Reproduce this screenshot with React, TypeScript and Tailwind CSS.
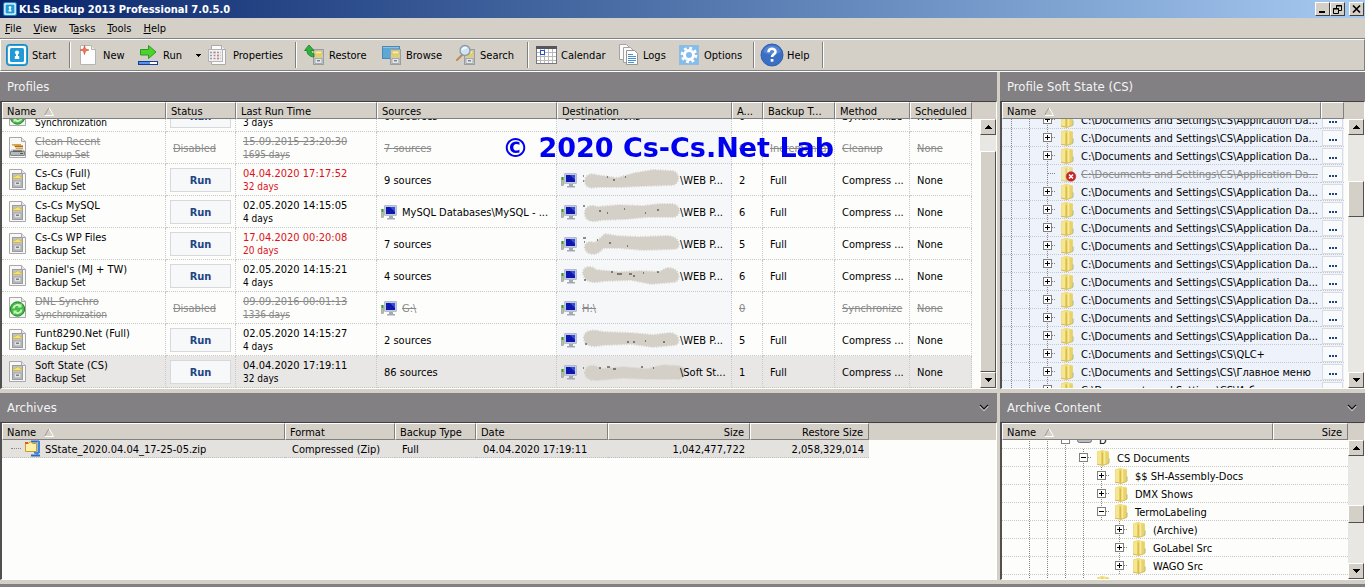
import { useLayoutEffect, useRef } from "react";
import type { ReactNode } from "react";

/* ---------- icons ---------- */

function AppIcon({ className }: { className: string }) {
  return (
    <svg className={className} viewBox="0 0 22 22" aria-hidden="true">
      <rect x="0.5" y="0.5" width="21" height="21" rx="3" fill="#2aa5dc" stroke="#1b86c4" />
      <rect x="2" y="2" width="18" height="18" rx="2" fill="#fff" />
      <rect x="4" y="4" width="14" height="14" rx="1.5" fill="#1f9bd7" />
      <circle cx="11" cy="8.6" r="2.1" fill="#fff" />
      <path d="M10 9h2v3h1.2v3H8.8v-3H10z" fill="#fff" />
    </svg>
  );
}

function Cabinet({ x, y }: { x: number; y: number }) {
  return (
    <g transform={`translate(${x} ${y})`}>
      <rect x="0.5" y="0.5" width="10" height="15" fill="#c9ccce" stroke="#9a9ea2" />
      <rect x="2" y="2" width="7" height="3" fill="#f9eda0" stroke="#c0ab50" strokeWidth="0.6" />
      <path d="M2 5.5h7l1 2.5H1z" fill="#ecd050" />
      <rect x="2" y="9.5" width="7" height="5" fill="#e4e7e9" stroke="#9a9ea2" strokeWidth="0.8" />
      <rect x="4" y="11" width="3" height="1.4" fill="#7b8084" />
    </g>
  );
}

const toolIcons: Record<string, ReactNode> = {
  New: (
    <svg width="24" height="22" viewBox="0 0 24 22">
      <path d="M4.500 1.500h11l4 4v15h-15z" fill="#fdfdfd" stroke="#b4b4b4" />
      <path d="M15.500 1.500v4h4" fill="#e9e9e9" stroke="#b4b4b4" />
      <path d="M8.500 1.500l1 3.500 3.500 1-3.500 1-1 3.500-1-3.500-3.500-1 3.500-1z" fill="#f0785a" stroke="#d8432a" strokeWidth="0.6" />
    </svg>
  ),
  Run: (
    <svg width="24" height="22" viewBox="0 0 24 22">
      <path d="M4.500 5.500h8V1.500l7.500 6.500-7.500 6.500V11h-8z" fill="#4bd42a" stroke="#2a9a20" />
      <rect x="2.500" y="17.500" width="19" height="3" fill="#fff" stroke="#153c9a" />
      <rect x="3" y="18" width="11" height="2" fill="#4f95ea" />
    </svg>
  ),
  Properties: (
    <svg width="24" height="22" viewBox="0 0 24 22">
      <path d="M5.500 1.500h10l4 4v15h-14z" fill="#fbfbfb" stroke="#aaa" />
      <path d="M15.500 1.500v4h4" fill="#eee" stroke="#aaa" />
      <rect x="2.500" y="5.500" width="14" height="12" fill="#f0f0f0" stroke="#b4b4b8" />
      <path d="M4 8.500h11M4 11.500h11M4 14.500h11" stroke="#9a9aa2" strokeDasharray="2 1.500" strokeWidth="1.500" />
      <path d="M7.500 8.500h2M11 11.500h2M11 14.500h2" stroke="#d88078" strokeWidth="1.500" />
    </svg>
  ),
  Restore: (
    <svg width="24" height="22" viewBox="0 0 24 22">
      <Cabinet x={11} y={5} />
      <path d="M7 1l5 5.500H9c0 2 1 3 3 3.500v3C7.500 12.500 5 10.500 5 6.500H2.500z" fill="#2fb23a" stroke="#187a24" strokeWidth="0.8" />
    </svg>
  ),
  Browse: (
    <svg width="24" height="22" viewBox="0 0 24 22">
      <rect x="3.500" y="2.500" width="17" height="12" fill="#5ba8d4" stroke="#4a88b8" />
      <path d="M4 3.500h16" stroke="#8cc4e4" />
      <Cabinet x={11} y={5} />
    </svg>
  ),
  Search: (
    <svg width="24" height="22" viewBox="0 0 24 22">
      <Cabinet x={11} y={5} />
      <path d="M9 11l-5 5" stroke="#c08a48" strokeWidth="2" strokeLinecap="round" />
      <circle cx="12" cy="6.500" r="5" fill="#cfe4f4" stroke="#8c9aa6" strokeWidth="1.300" />
      <path d="M9 6c1-2 3-2.500 4.500-2" stroke="#fff" fill="none" strokeWidth="1.500" />
    </svg>
  ),
  Calendar: (
    <svg width="24" height="22" viewBox="0 0 24 22">
      <rect x="2.500" y="2.500" width="20" height="17" fill="#fff" stroke="#77787c" />
      <rect x="2" y="2" width="21" height="3" fill="#55565c" />
      <path d="M6.500 5v14M10.500 5v14M14.500 5v14M18.500 5v14M3 8.500h19M3 12.500h19M3 16.500h19" stroke="#b9b9bd" />
      <rect x="6.500" y="6.500" width="4" height="4" fill="#fff" stroke="#2550d0" />
    </svg>
  ),
  Logs: (
    <svg width="24" height="22" viewBox="0 0 24 22">
      <path d="M3.500 0.500h7l3 3v12h-10z" fill="#fafafa" stroke="#a4a4a4" />
      <path d="M7.500 3.500h7l3 3v12h-10z" fill="#fafafa" stroke="#a4a4a4" />
      <path d="M10.500 6.500h8l3 3v11h-11z" fill="#fff" stroke="#949494" />
      <path d="M12 10.500h5M12 12.500h8M12 14.500h8M12 16.500h8M12 18.500h6" stroke="#4a90d4" />
    </svg>
  ),
  Options: (
    <svg width="24" height="22" viewBox="0 0 24 22">
      <rect x="2.500" y="1.500" width="19" height="19" fill="#84bdec" stroke="#94bce0" />
      <circle cx="12" cy="11" r="7" fill="none" stroke="#fff" strokeWidth="2.600" strokeDasharray="2.900 2.600" />
      <circle cx="12" cy="11" r="4.500" fill="none" stroke="#fff" strokeWidth="3" />
    </svg>
  ),
  Help: (
    <svg width="24" height="24" viewBox="0 0 24 24">
      <circle cx="12" cy="12" r="11" fill="#3a6fc4" stroke="#2f5fb0" />
      <path d="M3 9a9.500 9.500 0 0 1 18 0c-5 3-13 3-18 0z" fill="#5f90da" opacity="0.700" />
      <path d="M8.500 9.200c0-4.700 7-4.400 7-.4 0 2.600-3.500 2.600-3.500 5.200" stroke="#fff" strokeWidth="2.600" fill="none" />
      <rect x="10.700" y="16" width="2.700" height="2.700" fill="#fff" />
    </svg>
  ),
};

type Kind = "backup" | "sync" | "clean";

function ProfileIcon({ kind }: { kind: Kind }) {
  return (
    <svg width="18" height="22" viewBox="0 0 18 22" className="shrink-0" aria-hidden="true">
      <path d="M0.500 0.500h12l4 4v16h-16z" fill="#f8f8f8" stroke="#a8a8a8" />
      <path d="M12.500 0.500v4h4" fill="#e6e6e6" stroke="#a8a8a8" />
      {kind === "backup" && (
        <g>
          <rect x="3.500" y="4.500" width="10" height="14" fill="#c2c5c8" stroke="#989ca0" />
          <path d="M4 9.500h9v-2.500l-2 .5-2-2-3 2-2-.5z" fill="#f6e070" stroke="#bda74c" strokeWidth="0.600" />
          <rect x="5" y="12" width="7" height="5" fill="#dfe2e4" stroke="#989ca0" strokeWidth="0.800" />
          <rect x="7" y="13.500" width="3" height="1.500" fill="#7c8084" />
        </g>
      )}
      {kind === "sync" && (
        <g>
          <circle cx="8.500" cy="12" r="7.200" fill="#46bb46" stroke="#208028" />
          <path d="M4.500 11.500a4 4 0 0 1 7-2.200M12.500 12.500a4 4 0 0 1-7 2.200" stroke="#c4f5ba" strokeWidth="2" fill="none" />
          <path d="M12.500 6.500v4h-4zM4.500 17.500v-4h4z" fill="#c4f5ba" />
        </g>
      )}
      {kind === "clean" && (
        <g>
          <path d="M3 7h9v1.500H3z" fill="#e0a23a" />
          <path d="M5 8.500h9v1.500H6z" fill="#a56c1e" />
          <path d="M6 10.500h8v1.500H7z" fill="#e0a23a" />
          <path d="M2.500 13h12l1 2h-14z" fill="#f2f2f2" stroke="#9c9fa2" strokeWidth="0.800" />
          <rect x="1.500" y="14.500" width="14" height="4" rx="0.500" fill="#b4b8bb" stroke="#808487" />
          <path d="M4 14h9" stroke="#3b3b3b" />
          <path d="M11 16.500h3" stroke="#55585a" />
        </g>
      )}
    </svg>
  );
}

function ComputerIcon() {
  return (
    <svg width="18" height="16" viewBox="0 0 18 16" className="shrink-0" aria-hidden="true">
      <rect x="3.500" y="1.500" width="12" height="10" rx="0.500" fill="#c3cad8" stroke="#b4bccb" />
      <rect x="5" y="3" width="9" height="7" fill="#0d16b0" />
      <path d="M9 3h5v5z" fill="#3a4be0" />
      <path d="M8 12h4v2h2v1.500H6V14h2z" fill="#a4a9b5" />
      <rect x="0.500" y="5.500" width="2" height="8" fill="#b4bcae" stroke="#929a8e" strokeWidth="0.600" />
      <path d="M1.500 5v3" stroke="#2ca02c" strokeWidth="1.500" />
    </svg>
  );
}

function FolderIcon({ excluded }: { excluded?: boolean }) {
  return (
    <svg width="18" height="17" viewBox="0 0 18 17" className="shrink-0 overflow-visible" aria-hidden="true">
      <g opacity={excluded ? 0.7 : 1}>
        <path d="M5 2.500l5-1.500 7 1.500v12l-6 2-6-1z" fill="#eed873" />
        <path d="M5.500 3l4-1v13.500l-4-.8z" fill="#f5e691" />
        <path d="M9.500 3l2 1v12.200l-2-.3z" fill="#dcbc48" />
        <path d="M11.500 2l2 .5v12.700l-2 .8z" fill="#f8eba0" />
        <path d="M13.500 3l3 .5v10.700l-3 1z" fill="#ead26a" />
        <path d="M16.500 9.500h1v4.500h-1z" fill="#9fbb8c" />
        <path d="M5 15.200l6 1.200 6-2" stroke="#cbb254" strokeWidth="0.800" fill="none" />
      </g>
      {excluded && (
        <g>
          <circle cx="15" cy="11.500" r="4.800" fill="#cc2222" stroke="#b04040" strokeWidth="0.600" />
          <path d="M13 9.500l4 4M17 9.500l-4 4" stroke="#fff" strokeWidth="1.600" />
        </g>
      )}
    </svg>
  );
}

function ZipIcon() {
  return (
    <svg width="16" height="17" viewBox="0 0 16 17" className="shrink-0" aria-hidden="true">
      <path d="M6 1.500h8M6 15.500h9M9 12.500h5" stroke="#2b6cc0" strokeWidth="2" />
      <path d="M13.500 1v12" stroke="#3f86d8" strokeWidth="3" />
      <path d="M12.500 2v10" stroke="#a8ccf0" strokeWidth="0.800" />
      <path d="M9 12l3 3.500 3-3.500z" fill="#3f86d8" />
      <path d="M0.500 3.500h3l1-1.500h2l1 1.500h4v8h-11z" fill="#fdf0a8" stroke="#d09a2a" />
      <path d="M0 2h3v2H0z" fill="#dd5a1e" />
    </svg>
  );
}

type GuideKind = "blank" | "line" | "plus" | "minus" | "leaf";

function Guide({ kind }: { kind: GuideKind }) {
  const boxed = kind === "plus" || kind === "minus";
  return (
    <svg width="18" height="17" viewBox="0 0 18 17" className="shrink-0" shapeRendering="crispEdges" aria-hidden="true">
      {kind !== "blank" && <path d="M9.500 0v17" stroke="#848484" strokeDasharray="1 1" />}
      {(boxed || kind === "leaf") && <path d="M10 8.500h8" stroke="#848484" strokeDasharray="1 1" />}
      {boxed && <rect x="5.500" y="4.500" width="8" height="8" fill="#fff" stroke="#808080" />}
      {boxed && <path d="M7 8.500h5" stroke="#000" />}
      {kind === "plus" && <path d="M9.500 6v5" stroke="#000" />}
    </svg>
  );
}

function SortMark() {
  return (
    <svg width="10" height="9" viewBox="0 0 10 9" className="ml-2 shrink-0" aria-hidden="true">
      <path d="M5 0.500L0.500 8.500" stroke="#9c9a94" fill="none" />
      <path d="M5 0.500L9.500 8.500H0.500" stroke="#fff" fill="none" />
    </svg>
  );
}

function Chevron() {
  return (
    <svg width="10" height="7" viewBox="0 0 10 7" aria-hidden="true">
      <path d="M1 2l4 4 4-4" stroke="#f0f0f0" strokeWidth="1.500" fill="none" />
      <path d="M1 1l4 4 4-4" stroke="#111" strokeWidth="1.300" fill="none" />
    </svg>
  );
}

/* Patches painted over private parts of a destination path */
const smudges = [
  { d: "M2 12C2 6 8 4 13 6L34 9 52 4 70 1 90 2C97 4 97 14 90 16L60 17 40 18 14 18C6 20 2 17 2 12Z", bits: "M0 7h1M0 12h1M24 8h1M30 11h2M42 8h1" },
  { d: "M2 13C1 6 8 3 14 6L36 4 60 5 76 3 90 3C98 5 98 14 91 16L64 16 44 18 18 19C8 22 2 19 2 13Z", bits: "M0 5h2M16 10h2M24 12h1M41 8h1M74 9h2M62 12h1" },
  { d: "M2 15C1 9 8 8 12 10L22 1 34 3 56 4 84 3C97 3 99 15 92 16L60 17 36 15 20 15C14 24 3 22 2 15Z", bits: "M0 5h3M1 9h1M14 7h1M26 10h2M44 13h1" },
  { d: "M0 8C0 1 9 0 13 5L36 7 58 6 76 7 84 3C97 2 99 16 91 17L68 19 48 15 20 16C8 19 1 16 0 8Z", bits: "M1 15h2M28 7h2M34 9h5M46 9h3M50 11h2M60 8h1M74 7h2" },
  { d: "M1 9C1 1 10 0 20 3L48 4 70 6 86 4C97 4 98 15 92 16L70 18 48 15 20 16C8 19 1 16 1 9Z", bits: "M2 15h2M44 13h2M50 13h2M62 12h1M80 13h2" },
  { d: "M2 12C2 3 12 3 18 8L40 6 64 8 80 4 96 5C104 7 103 17 96 18L64 18 40 17 16 19C7 20 2 17 2 12Z", bits: "M0 7h1M16 7h2M24 6h3M30 8h3M58 6h2M70 7h1" },
];

function Smudge({ n }: { n: number }) {
  return (
    <svg width="97" height="22" viewBox="0 0 97 22" className="shrink-0 overflow-visible" aria-hidden="true">
      <path d={smudges[n].d} fill="#d4d0c8" />
      <path d={smudges[n].d} fill="none" stroke="#d4d0c8" strokeWidth="2" strokeDasharray="1 1.500" />
      <path d={smudges[n].bits} stroke="#222" strokeWidth="1.200" />
    </svg>
  );
}

/* ---------- shared pieces ---------- */

function Th({ children, right, sort }: { children?: ReactNode; right?: boolean; sort?: boolean }) {
  return (
    <th className="sticky top-0 z-10 h-[17px] border-t border-r border-b border-l border-t-white border-r-[#808080] border-b-[#808080] border-l-white bg-[#d4d0c8] p-0 font-normal">
      <div className={right ? "flex h-[15px] items-center justify-end pt-0.5 pr-[5px]" : "flex h-[15px] items-center pt-0.5 pl-1"}>
        <span className="whitespace-nowrap">{children}</span>
        {sort && <SortMark />}
      </div>
    </th>
  );
}

function FillTh() {
  return <th aria-hidden="true" className="sticky top-0 z-10 h-[17px] bg-[#d4d0c8] p-0" />;
}

function ScrollButton({ down }: { down?: boolean }) {
  return (
    <button
      type="button"
      aria-label={down ? "Scroll down" : "Scroll up"}
      className="flex h-4 w-4 shrink-0 items-center justify-center border border-t-white border-r-[#505050] border-b-[#505050] border-l-white bg-[#d4d0c8]"
    >
      <svg width="7" height="4" viewBox="0 0 7 4" shapeRendering="crispEdges">
        <path d={down ? "M0 0h7L3.500 4z" : "M0 4h7L3.500 0z"} fill="#000" />
      </svg>
    </button>
  );
}

function Scrollbar({ before, thumb, after }: { before: string; thumb: string; after: string }) {
  return (
    <div className="flex w-4 shrink-0 flex-col bg-[#e9e7e3]">
      <div className="h-[17px] shrink-0 bg-[#d4d0c8]" />
      <ScrollButton />
      <div className={before} />
      <div className={`${thumb} border border-t-white border-r-[#505050] border-b-[#505050] border-l-white bg-[#d4d0c8]`} />
      <div className={after} />
      <ScrollButton down />
    </div>
  );
}

function Scroller({ offset, children }: { offset: number; children: ReactNode }) {
  const ref = useRef<HTMLDivElement>(null);
  useLayoutEffect(() => {
    if (ref.current) ref.current.scrollTop = offset;
  }, [offset]);
  return (
    <div ref={ref} className="min-w-0 flex-1 overflow-hidden bg-[#fdfefc]">
      {children}
    </div>
  );
}

function Panel({ title, collapsible, className, children }: { title: string; collapsible?: boolean; className: string; children: ReactNode }) {
  return (
    <section className={`flex min-w-0 flex-col ${className}`}>
      <header className="flex h-[29px] shrink-0 items-center justify-between bg-[#828083] pr-2 pl-[7px]">
        <h2 className="text-[13px] text-[#f4f4f4]">{title}</h2>
        {collapsible && (
          <button type="button" aria-label={`Collapse ${title}`}>
            <Chevron />
          </button>
        )}
      </header>
      <div className="flex min-h-0 flex-1 border-t border-r border-b border-l-2 border-t-[#404040] border-r-white border-b-white border-l-[#505050]">
        {children}
      </div>
    </section>
  );
}

/* ---------- profiles ---------- */

type Profile = {
  name: string;
  type: string;
  kind: Kind;
  time: string;
  days: string;
  late?: boolean;
  off?: boolean;
  selected?: boolean;
  src: string;
  srcIcon?: boolean;
  dest: string;
  smudge?: number;
  archives: string;
  backup: string;
  method: string;
};

const profiles: Profile[] = [
  { name: "", type: "Synchronization", kind: "sync", time: "", days: "3 days", src: "67 sources", dest: "67 destinations", archives: "0", backup: "", method: "Synchronize" },
  { name: "Clean Recent", type: "Cleanup Set", kind: "clean", time: "15.09.2015 23:20:30", days: "1695 days", off: true, src: "7 sources", dest: "", archives: "0", backup: "Incremental", method: "Cleanup" },
  { name: "Cs-Cs (Full)", type: "Backup Set", kind: "backup", time: "04.04.2020 17:17:52", days: "32 days", late: true, src: "9 sources", dest: "\\WEB P...", smudge: 0, archives: "2", backup: "Full", method: "Compress ..." },
  { name: "Cs-Cs MySQL", type: "Backup Set", kind: "backup", time: "02.05.2020 14:15:05", days: "4 days", src: "MySQL Databases\\MySQL - ...", srcIcon: true, dest: "\\WEB P...", smudge: 1, archives: "6", backup: "Full", method: "Compress ..." },
  { name: "Cs-Cs WP Files", type: "Backup Set", kind: "backup", time: "17.04.2020 00:20:08", days: "20 days", late: true, src: "7 sources", dest: "\\WEB P...", smudge: 2, archives: "5", backup: "Full", method: "Compress ..." },
  { name: "Daniel's (MJ + TW)", type: "Backup Set", kind: "backup", time: "02.05.2020 14:15:21", days: "4 days", src: "4 sources", dest: "\\WEB P...", smudge: 3, archives: "6", backup: "Full", method: "Compress ..." },
  { name: "DNL Synchro", type: "Synchronization", kind: "sync", time: "09.09.2016 00:01:13", days: "1336 days", off: true, src: "G:\\", srcIcon: true, dest: "H:\\", archives: "0", backup: "", method: "Synchronize" },
  { name: "Funt8290.Net (Full)", type: "Backup Set", kind: "backup", time: "02.05.2020 14:15:27", days: "4 days", src: "2 sources", dest: "\\WEB P...", smudge: 4, archives: "5", backup: "Full", method: "Compress ..." },
  { name: "Soft State (CS)", type: "Backup Set", kind: "backup", time: "04.04.2020 17:19:11", days: "32 days", selected: true, src: "86 sources", dest: "\\Soft St...", smudge: 5, archives: "1", backup: "Full", method: "Compress ..." },
];

function Td({ children, tint }: { children?: ReactNode; tint?: string }) {
  return <td className={`h-8 border-r border-b border-dotted border-[#c8c8c8] p-0 ${tint ?? ""}`}>{children}</td>;
}

function PlainCell({ text, iconed, off }: { text: string; iconed?: boolean; off?: boolean }) {
  return (
    <div className={iconed ? "flex items-center gap-[3px] pt-px pl-1" : "flex items-center pt-px pl-[7px]"}>
      {iconed && <ComputerIcon />}
      <span className={off ? "whitespace-nowrap text-[#8a8a8a] line-through" : "whitespace-nowrap"}>{text}</span>
    </div>
  );
}

function TwoLines({ a, b, tone }: { a: string; b: string; tone: string }) {
  return (
    <div className={`min-w-0 leading-[13px] whitespace-nowrap ${tone}`}>
      <div className="h-[13px]">{a}</div>
      <div className="h-[13px] text-[10px]">{b}</div>
    </div>
  );
}

function ProfileRow({ p }: { p: Profile }) {
  const tone = p.off ? "text-[#8a8a8a] line-through" : "";
  return (
    <tr className={p.selected ? "bg-[#e9e7e5]" : ""}>
      <Td>
        <div className="flex items-center gap-2 pl-[7px]">
          <ProfileIcon kind={p.kind} />
          <TwoLines a={p.name} b={p.type} tone={tone} />
        </div>
      </Td>
      <Td>
        {p.off ? (
          <PlainCell text="Disabled" off />
        ) : (
          <div className="pt-px pr-1 pl-1">
            <button type="button" className="block h-6 w-full border border-[#d6d8da] bg-[#f6f8f9] text-[11px] font-bold text-[#1f4583]">
              Run
            </button>
          </div>
        )}
      </Td>
      <Td>
        <div className="pl-[7px]">
          <TwoLines a={p.time} b={p.days} tone={p.late ? "text-[#e01018]" : tone} />
        </div>
      </Td>
      <Td>
        <PlainCell text={p.src} iconed={p.srcIcon} off={p.off} />
      </Td>
      <Td tint={p.selected ? "" : "bg-[#f6f7f8]"}>
        {p.smudge !== undefined ? (
          <div className="flex items-center pt-px pl-1">
            <ComputerIcon />
            <span className="w-1 shrink-0" />
            <Smudge n={p.smudge} />
            <span className="whitespace-nowrap">{p.dest}</span>
          </div>
        ) : (
          p.dest && <PlainCell text={p.dest} iconed={p.off} off={p.off} />
        )}
      </Td>
      <Td><PlainCell text={p.archives} off={p.off} /></Td>
      <Td><PlainCell text={p.backup} off={p.off} /></Td>
      <Td><PlainCell text={p.method} off={p.off} /></Td>
      <Td><PlainCell text="None" off={p.off} /></Td>
      <td className="bg-[#fdfefc] p-0" />
    </tr>
  );
}

function ProfilesTable() {
  return (
    <table className="w-full table-fixed border-separate border-spacing-0 text-left">
      <colgroup>
        <col className="w-[164px]" />
        <col className="w-[70px]" />
        <col className="w-[141px]" />
        <col className="w-[180px]" />
        <col className="w-[175px]" />
        <col className="w-[31px]" />
        <col className="w-[72px]" />
        <col className="w-[75px]" />
        <col className="w-[62px]" />
        <col />
      </colgroup>
      <thead>
        <tr>
          <Th sort>Name</Th>
          <Th>Status</Th>
          <Th>Last Run Time</Th>
          <Th>Sources</Th>
          <Th>Destination</Th>
          <Th>A...</Th>
          <Th>Backup T...</Th>
          <Th>Method</Th>
          <Th>Scheduled</Th>
          <FillTh />
        </tr>
      </thead>
      <tbody>
        {profiles.map((p) => (
          <ProfileRow key={p.name} p={p} />
        ))}
      </tbody>
    </table>
  );
}

/* ---------- trees ---------- */

type Node = { label: string; guides: GuideKind[]; off?: boolean; drive?: boolean };

const plus: GuideKind[] = ["line", "line", "plus"];
const appData = "C:\\Documents and Settings\\CS\\Application Da...";
const stateNodes: Node[] = [
  ...Array.from({ length: 13 }, (_, i): Node => (i === 3 ? { label: appData, guides: ["line", "line", "leaf"], off: true } : { label: appData, guides: plus })),
  { label: "C:\\Documents and Settings\\CS\\QLC+", guides: plus },
  { label: "C:\\Documents and Settings\\CS\\Главное меню", guides: plus },
  { label: "C:\\Documents and Settings\\CS\\Избранное", guides: plus },
];

const contentNodes: Node[] = [
  { label: "D", guides: ["blank", "line", "line", "minus"], drive: true },
  { label: "CS Documents", guides: ["blank", "line", "line", "line", "minus"] },
  { label: "$$ SH-Assembly-Docs", guides: ["blank", "line", "line", "line", "line", "plus"] },
  { label: "DMX Shows", guides: ["blank", "line", "line", "line", "line", "plus"] },
  { label: "TermoLabeling", guides: ["blank", "line", "line", "line", "line", "minus"] },
  { label: "(Archive)", guides: ["blank", "line", "line", "line", "line", "blank", "plus"] },
  { label: "GoLabel Src", guides: ["blank", "line", "line", "line", "line", "blank", "plus"] },
  { label: "WAGO Src", guides: ["blank", "line", "line", "line", "line", "blank", "plus"] },
  { label: "", guides: ["blank", "line", "line", "line", "line"] },
];

function TreeCell({ node }: { node: Node }) {
  return (
    <div className="flex h-[17px] items-center">
      {node.guides.map((g, i) => (
        <Guide key={i} kind={g} />
      ))}
      {node.drive ? (
        <svg width="18" height="17" viewBox="0 0 18 17" className="shrink-0" aria-hidden="true">
          <rect x="3.500" y="6.500" width="14" height="5" rx="2" fill="#b8bcc0" stroke="#707478" />
        </svg>
      ) : (
        <FolderIcon excluded={node.off} />
      )}
      <span className={node.off ? "ml-[7px] pt-0.5 whitespace-nowrap text-[#8a8a8a] line-through" : "ml-[7px] pt-0.5 whitespace-nowrap"}>{node.label}</span>
    </div>
  );
}

function StateTree() {
  return (
    <table className="w-full table-fixed border-separate border-spacing-0 text-left">
      <colgroup>
        <col />
        <col className="w-[23px]" />
        <col className="w-1" />
      </colgroup>
      <thead>
        <tr>
          <Th sort>Name</Th>
          <Th />
          <FillTh />
        </tr>
      </thead>
      <tbody>
        {stateNodes.map((n, i) => (
          <tr key={i}>
            <td className="border-b border-dotted border-[#c4c8cf] bg-[#edf2fb] p-0">
              <TreeCell node={n} />
            </td>
            <td className="border-b border-dotted border-[#c4c8cf] bg-[#edf2fb] p-0">
              <button type="button" aria-label="Edit source" className="mx-px flex h-4 w-[21px] items-center justify-center border border-[#d8dce2] bg-[#f8fafc]">
                <svg width="8" height="8" viewBox="0 0 8 8" shapeRendering="crispEdges">
                  <path d="M0 5h2v2H0zM3 5h2v2H3zM6 5h2v2H6z" fill="#1f4583" />
                </svg>
              </button>
            </td>
            <td className="p-0" />
          </tr>
        ))}
      </tbody>
    </table>
  );
}

function ContentTree() {
  return (
    <table className="w-full table-fixed border-separate border-spacing-0 text-left">
      <colgroup>
        <col />
        <col className="w-[75px]" />
      </colgroup>
      <thead>
        <tr>
          <Th sort>Name</Th>
          <Th right>Size</Th>
        </tr>
      </thead>
      <tbody>
        {contentNodes.map((n, i) => (
          <tr key={i}>
            <td className="border-b border-dotted border-[#c8c8c8] p-0">
              <TreeCell node={n} />
            </td>
            <td className="border-b border-dotted border-[#c8c8c8] p-0" />
          </tr>
        ))}
      </tbody>
    </table>
  );
}

/* ---------- archives ---------- */

function ArchivesTable() {
  const cell = "h-[18px] border-b border-dotted border-[#c0c0c0] bg-[#e4e2df] p-0 pt-px pl-[7px]";
  const num = "h-[18px] border-b border-dotted border-[#c0c0c0] bg-[#e4e2df] p-0 pt-px pr-[5px] text-right";
  return (
    <table className="w-full table-fixed border-separate border-spacing-0 text-left">
      <colgroup>
        <col className="w-[283px]" />
        <col className="w-[110px]" />
        <col className="w-[81px]" />
        <col className="w-[132px]" />
        <col className="w-[142px]" />
        <col className="w-[119px]" />
        <col />
      </colgroup>
      <thead>
        <tr>
          <Th sort>Name</Th>
          <Th>Format</Th>
          <Th>Backup Type</Th>
          <Th>Date</Th>
          <Th right>Size</Th>
          <Th right>Restore Size</Th>
          <FillTh />
        </tr>
      </thead>
      <tbody>
        <tr>
          <td className="h-[18px] border-b border-dotted border-[#c0c0c0] bg-[#e4e2df] p-0">
            <div className="flex h-[17px] items-center pl-[9px]">
              <span className="mr-1 w-[10px] border-t border-dotted border-[#888]" />
              <ZipIcon />
              <span className="ml-1 pt-px">SState_2020.04.04_17-25-05.zip</span>
            </div>
          </td>
          <td className={cell}>Compressed (Zip)</td>
          <td className={cell}>Full</td>
          <td className={cell}>04.04.2020 17:19:11</td>
          <td className={num}>1,042,477,722</td>
          <td className={num}>2,058,329,014</td>
          <td />
        </tr>
      </tbody>
    </table>
  );
}

/* ---------- window chrome ---------- */

function TitleBar() {
  const btn = "flex h-[14px] w-[15px] items-center justify-center border border-t-white border-r-[#404040] border-b-[#404040] border-l-white bg-[#d4d0c8]";
  return (
    <div className="flex h-[18px] shrink-0 items-center bg-linear-to-r from-[#0a246a] to-[#a6caf0] pr-px pl-[3px]">
      <AppIcon className="h-[14px] w-[14px]" />
      <h1 className="ml-0.5 flex-1 text-[11px] font-bold text-white">KLS Backup 2013 Professional 7.0.5.0</h1>
      <button type="button" aria-label="Minimize" className={btn}>
        <svg width="9" height="8" viewBox="0 0 9 8"><path d="M1 6h6v2H1z" /></svg>
      </button>
      <button type="button" aria-label="Restore window" className={btn}>
        <svg width="9" height="9" viewBox="0 0 9 9" fill="none" stroke="#000">
          <path d="M3.500 3V0.500h5v5H6M3 1h6M0.500 3.500h5v5h-5zM0 4h6" />
        </svg>
      </button>
      <button type="button" aria-label="Close" className={`ml-1 ${btn}`}>
        <svg width="9" height="8" viewBox="0 0 9 8"><path d="M1 0.500l7 7M8 0.500l-7 7" stroke="#000" strokeWidth="1.600" /></svg>
      </button>
    </div>
  );
}

const menus = [
  ["", "F", "ile"],
  ["", "V", "iew"],
  ["T", "a", "sks"],
  ["", "T", "ools"],
  ["", "H", "elp"],
];

function MenuBar() {
  return (
    <nav className="flex h-5 shrink-0 items-center gap-3 pl-[5px]">
      {menus.map(([a, b, c]) => (
        <button type="button" key={a + b + c}>
          {a}
          <span className="underline">{b}</span>
          {c}
        </button>
      ))}
    </nav>
  );
}

function Separator() {
  return <span className="mr-[5px] h-[26px] w-0.5 shrink-0 border-r border-l border-r-white border-l-[#808080]" />;
}

function Tool({ label, width }: { label: string; width: string }) {
  return (
    <button type="button" className={`flex h-7 shrink-0 items-center gap-[3px] whitespace-nowrap ${width}`}>
      <span className="flex w-6 shrink-0 justify-center">
        {label === "Start" ? <AppIcon className="h-[22px] w-[22px]" /> : toolIcons[label]}
      </span>
      {label}
    </button>
  );
}

function Toolbar() {
  return (
    <div className="flex h-[34px] shrink-0 items-center border-t border-b border-t-[#808080] border-b-white">
      <div className="flex h-8 min-w-0 flex-1 items-center border border-t-white border-r-[#808080] border-b-[#808080] border-l-white pl-1">
        <Tool label="Start" width="w-16" />
        <Separator />
        <Tool label="New" width="w-[60px]" />
        <Tool label="Run" width="w-[54px]" />
        <button type="button" aria-label="Run options" className="flex h-7 w-4 items-center justify-center">
          <svg width="5" height="3" viewBox="0 0 5 3" shapeRendering="crispEdges"><path d="M0 0h5L2.500 3z" /></svg>
        </button>
        <Tool label="Properties" width="w-[89px]" />
        <Separator />
        <Tool label="Restore" width="w-[77px]" />
        <Tool label="Browse" width="w-[74px]" />
        <Tool label="Search" width="w-[74px]" />
        <Separator />
        <Tool label="Calendar" width="w-[82px]" />
        <Tool label="Logs" width="w-[61px]" />
        <Tool label="Options" width="w-[76px]" />
        <Separator />
        <Tool label="Help" width="w-[62px]" />
        <Separator />
      </div>
    </div>
  );
}

export default function App() {
  return (
    <div className="flex h-screen flex-col overflow-hidden bg-[#d4d0c8] font-[DejaVu_Sans_Condensed,Noto_Sans,sans-serif] text-[11px] leading-[15px] text-black">
      <TitleBar />
      <MenuBar />
      <Toolbar />
      <main className="flex min-h-0 flex-1 gap-[3px]">
        <div className="relative flex min-w-0 flex-1 flex-col gap-1">
          <Panel title="Profiles" className="min-h-0 flex-1">
            <Scroller offset={19}>
              <ProfilesTable />
            </Scroller>
            <Scrollbar before="h-4" thumb="flex-1" after="h-0" />
          </Panel>
          <Panel title="Archives" collapsible className="h-[187px]">
            <Scroller offset={0}>
              <ArchivesTable />
            </Scroller>
          </Panel>
          <p className="pointer-events-none absolute top-[60px] left-[502px] z-20 font-[DejaVu_Sans,sans-serif] text-[27px] leading-8 font-bold whitespace-nowrap text-[#0000f0]">
            © 2020 Cs-Cs.Net Lab
          </p>
        </div>
        <div className="flex w-[365px] shrink-0 flex-col gap-1">
          <Panel title="Profile Soft State (CS)" className="min-h-0 flex-1">
            <Scroller offset={8}>
              <StateTree />
            </Scroller>
            <Scrollbar before="h-[46px]" thumb="h-9" after="flex-1" />
          </Panel>
          <Panel title="Archive Content" collapsible className="h-[187px]">
            <Scroller offset={9}>
              <ContentTree />
            </Scroller>
            <Scrollbar before="h-[49px]" thumb="h-[18px]" after="flex-1" />
          </Panel>
        </div>
      </main>
      <footer className="h-[7px] shrink-0 border-b-[3px] border-[#808080]" />
    </div>
  );
}
